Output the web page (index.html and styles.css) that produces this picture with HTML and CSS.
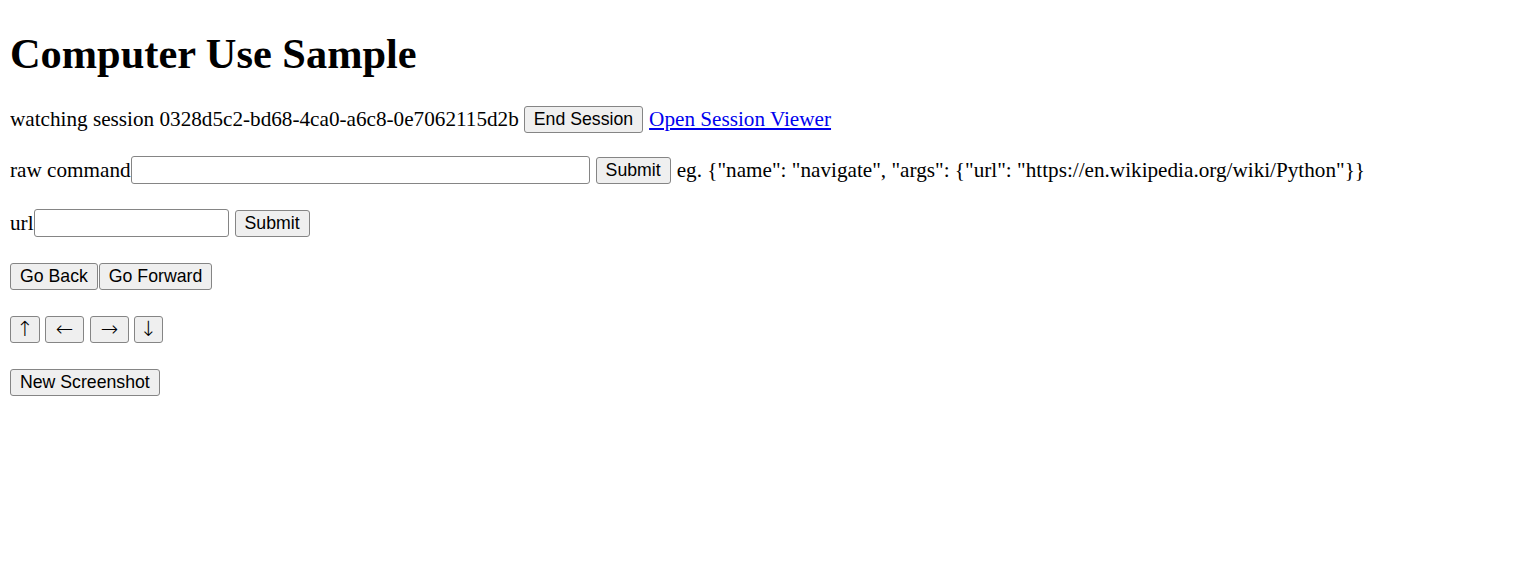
FILE: index.html
```html
<!doctype html>
<html lang="en">
  <head>
    <meta charset="UTF-8" />
    <meta name="viewport" content="width=device-width, initial-scale=1.0" />
    <title>Computer Use Sample</title>
    <link rel="stylesheet" href="styles.css">
  </head>
  <body>
    <h1>Computer Use Sample</h1>

    <div class="row">
      <span>watching session 0328d5c2-bd68-4ca0-a6c8-0e7062115d2b</span>
      <button>End Session</button>
      <a href="#" class="viewer-link">Open Session Viewer</a>
    </div>

    <div class="row">
      <label for="rawCommand">raw command</label>
      <input type="text" id="rawCommand" class="raw-input" />
      <button class="spaced">Submit</button>
      <span class="hint">eg. {"name": "navigate", "args": {"url": "https://en.wikipedia.org/wiki/Python"}}</span>
    </div>

    <div class="row">
      <label for="url">url</label>
      <input type="text" id="url" class="url-input" />
      <button class="spaced">Submit</button>
    </div>

    <div class="row tight">
      <button>Go Back</button>
      <button>Go Forward</button>
    </div>

    <div class="row">
      <button class="arrow arrow-v">↑</button>
      <button class="arrow arrow-h">←</button>
      <button class="arrow arrow-h right">→</button>
      <button class="arrow arrow-v down">↓</button>
    </div>

    <div class="row">
      <button>New Screenshot</button>
    </div>
  </body>
</html>
```

FILE: styles.css
```css
body {
  margin: 10px;
  font-family: "Liberation Serif", "Times New Roman", serif;
  font-size: 21.2px;
  color: #000;
  background-color: #fff;
}

h1 {
  font-size: 42.4px;
  line-height: 48px;
  margin: 20px 0 25px;
}

.row {
  display: flex;
  align-items: center;
  gap: 5px;
  height: 32px;
  margin-bottom: 21px;
}

.row:first-of-type {
  margin-bottom: 19px;
}

.row.tight {
  gap: 1px;
}

label {
  margin-right: -5px;
}

button {
  font-family: "Liberation Sans", Arial, sans-serif;
  font-size: 17.7px;
  height: 27px;
  padding: 0 9px;
  background-color: #efefef;
  color: #000;
  border: 1px solid #858585;
  border-radius: 3px;
}

.arrow {
  font-family: "DejaVu Sans", sans-serif;
  font-size: 21px;
  font-weight: 200;
  line-height: 1;
  padding: 0;
  text-align: center;
}

.arrow-v {
  width: 30px;
}

.arrow-h {
  width: 39px;
}

.right {
  margin-left: 1px;
}

.down {
  width: 29px;
}

.spaced {
  margin-left: 1px;
}

input {
  height: 28px;
  box-sizing: border-box;
  border: 1px solid #858585;
  border-radius: 3px;
  padding: 1px 3px;
  font-size: 17px;
}

.raw-input {
  width: 459px;
}

.url-input {
  width: 195px;
}

.viewer-link {
  color: #0000ee;
  margin-left: 1px;
}

.hint {
  margin-left: 1px;
}
```
